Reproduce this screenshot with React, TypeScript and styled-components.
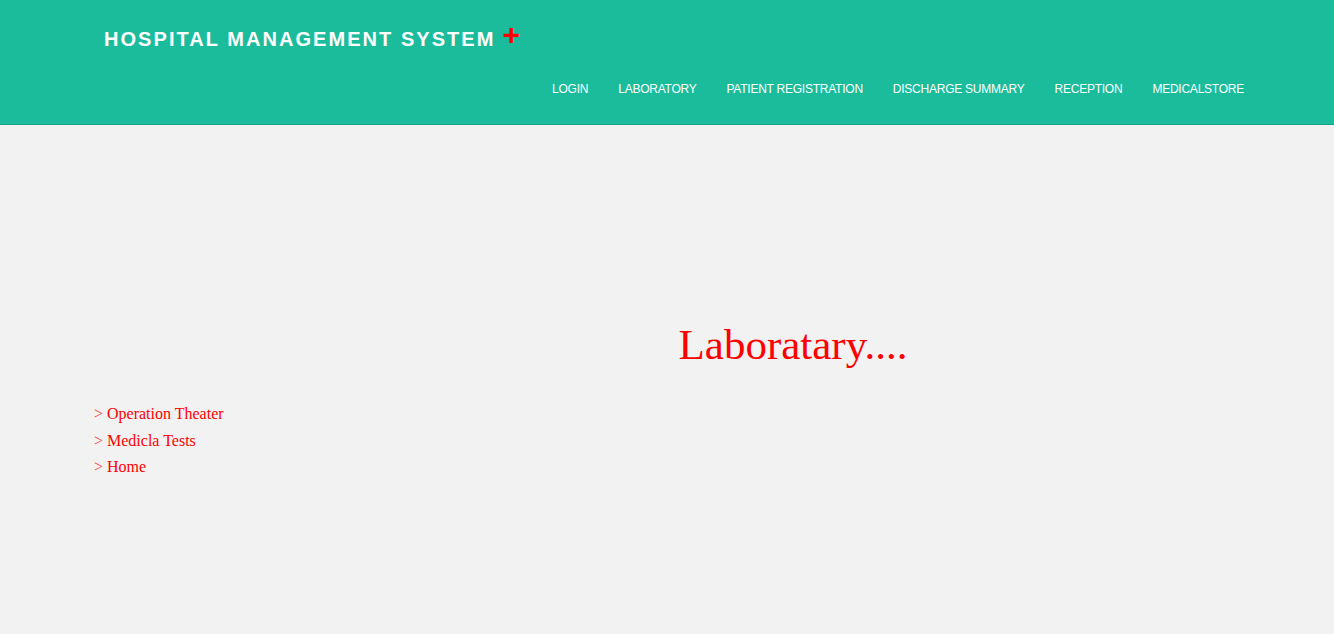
import React from 'react';
import styled, { createGlobalStyle } from 'styled-components';

const GlobalStyle = createGlobalStyle`
  html, body {
    margin: 0;
    padding: 0;
    background: #f2f2f2;
    font-family: "Liberation Serif", "Times New Roman", serif;
  }
`;

const Header = styled.header`
  height: 125px;
  background-color: #1abc9c;
  border-bottom: 1px solid #16a085;
  box-sizing: border-box;
  padding: 0 90px 0 104px;
  display: flex;
  flex-direction: column;
`;

const Brand = styled.div`
  display: flex;
  align-items: flex-start;
  margin-top: 23px;
  font-family: "Liberation Sans", Arial, sans-serif;
  font-weight: 700;
  font-size: 20px;
  letter-spacing: 2.05px;
  color: #fff;
  height: 34px;
  line-height: 32px;
`;

const Cross = styled.span`
  color: #ff0000;
  font-size: 30px;
  line-height: 24px;
  margin-left: 7px;
  letter-spacing: 0;
`;

const Nav = styled.nav`
  display: flex;
  justify-content: flex-end;
  gap: 30px;
  margin-top: 24px;
`;

const NavLink = styled.a`
  font-family: "Liberation Sans", Arial, sans-serif;
  font-size: 12px;
  letter-spacing: -0.24px;
  color: #fff;
  text-decoration: none;
  text-transform: uppercase;
  line-height: 16px;
  cursor: pointer;
`;

const Main = styled.main`
  padding-top: 195px;
`;

const TitleRow = styled.div`
  margin-left: 252px;
  text-align: center;
`;

const Title = styled.h1`
  margin: 0;
  font-weight: 400;
  font-size: 43px;
  line-height: 50px;
  color: #ff0000;
`;

const SideList = styled.ul`
  list-style: none;
  margin: 31px 0 0 94px;
  padding: 0;
`;

const SideItem = styled.li`
  font-size: 16px;
  line-height: 26.5px;
  color: #ff0000;
  cursor: pointer;
`;

const Arrow = styled.span`
  color: #ff4444;
  margin-right: 4px;
`;

const navItems = [
  'Login',
  'Laboratory',
  'Patient Registration',
  'Discharge Summary',
  'Reception',
  'Medicalstore',
];

const sideItems = ['Operation Theater', 'Medicla Tests', 'Home'];

export default function App() {
  return (
    <>
      <GlobalStyle />
      <Header>
        <Brand>
          HOSPITAL MANAGEMENT SYSTEM
          <Cross>+</Cross>
        </Brand>
        <Nav>
          {navItems.map((item) => (
            <NavLink key={item}>{item}</NavLink>
          ))}
        </Nav>
      </Header>
      <Main>
        <TitleRow>
          <Title>Laboratary....</Title>
        </TitleRow>
        <SideList>
          {sideItems.map((item) => (
            <SideItem key={item}>
              <Arrow>&gt;</Arrow>
              {item}
            </SideItem>
          ))}
        </SideList>
      </Main>
    </>
  );
}
